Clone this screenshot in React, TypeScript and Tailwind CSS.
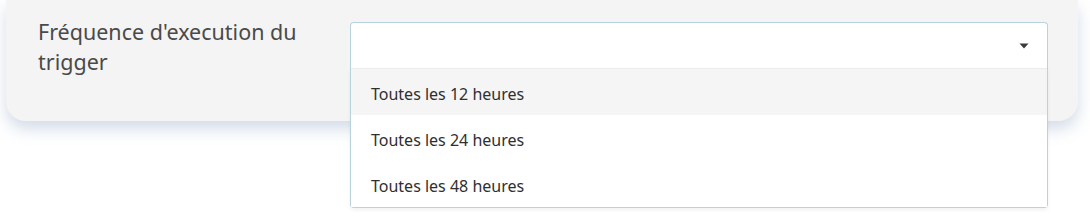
import { useState } from 'react';

const options = ['Toutes les 12 heures', 'Toutes les 24 heures', 'Toutes les 48 heures'];

function TriggerSelect() {
  const [active] = useState(0);

  return (
    <div className="relative flex-1">
      <div className="flex h-[46px] items-center justify-end rounded-t-[4px] border border-b-0 border-[#b8d3dc] bg-white pr-[18px]">
        <svg width="10" height="6" viewBox="0 0 10 6" className="mt-[1px]">
          <path d="M0.5 0.5 L9.5 0.5 L5 5.5 Z" fill="#3a3a3a" />
        </svg>
      </div>
      <div className="absolute left-0 right-0 top-[46px] z-10 rounded-b-[4px] border border-t-0 border-[#b8d3dc] bg-white shadow-[0_2px_4px_rgba(0,0,0,0.06)]">
        <div className="border-t border-[#ececec]">
          {options.map((opt, i) => (
            <div
              key={opt}
              className={`flex h-[46px] items-center pl-5 pt-[3px] text-[16px] text-[#2f2f2f] ${i === active ? 'bg-[#f5f5f5]' : 'bg-white'}`}
            >
              {opt}
            </div>
          ))}
        </div>
      </div>
    </div>
  );
}

export default function App() {
  return (
    <div className="h-[216px] w-[1090px] bg-white font-['Noto_Sans',sans-serif]">
      <div className="ml-[6px] mr-[12px] flex h-[121px] rounded-b-[20px] bg-[#f4f4f4] pl-8 pr-[30px] pt-[22px] shadow-[0_8px_16px_rgba(160,178,205,0.45)]">
        <div className="-mt-[5px] w-[312px] shrink-0 pr-[30px] text-[21.5px] leading-[30px] text-[#4a4a4a]">
          Fréquence d'execution du trigger
        </div>
        <TriggerSelect />
      </div>
    </div>
  );
}
